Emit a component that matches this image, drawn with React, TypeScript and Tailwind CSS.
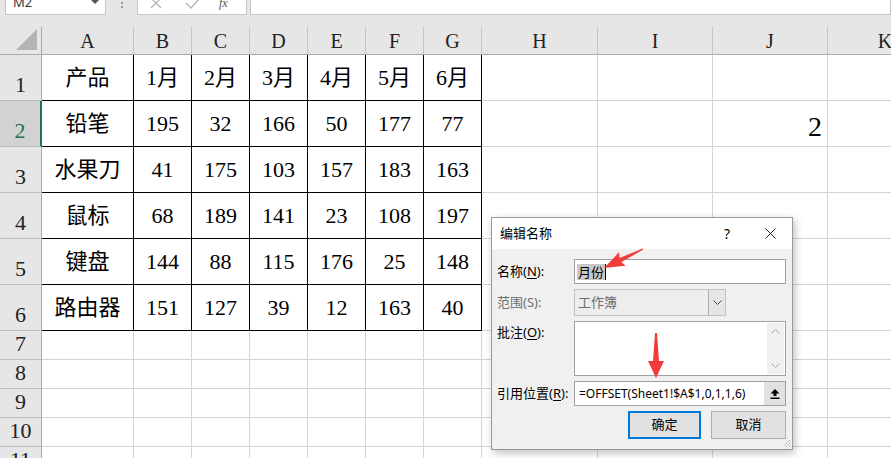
import React from 'react';

const cols = ['A', 'B', 'C', 'D', 'E', 'F', 'G', 'H', 'I', 'J', 'K'];

const data = [
  ['产品', '1月', '2月', '3月', '4月', '5月', '6月'],
  ['铅笔', '195', '32', '166', '50', '177', '77'],
  ['水果刀', '41', '175', '103', '157', '183', '163'],
  ['鼠标', '68', '189', '141', '23', '108', '197'],
  ['键盘', '144', '88', '115', '176', '25', '148'],
  ['路由器', '151', '127', '39', '12', '163', '40'],
];

const rowHeights = ['h-[46px]', 'h-[46px]', 'h-[46px]', 'h-[46px]', 'h-[46px]', 'h-[46px]', 'h-[29px]', 'h-[29px]', 'h-[29px]', 'h-[29px]', 'h-[29px]'];

function TopBar() {
  return (
    <div className="h-[27px] bg-[#e6e6e6] flex items-start overflow-hidden font-['Noto_Sans',sans-serif]">
      <div className="ml-[5px] -mt-[10px] w-[101px] h-[25px] bg-white border border-[#c6c6c6] flex items-center justify-between pl-[7px] pr-[6px] text-[13px] text-[#333] shrink-0">
        <span>M2</span>
        <svg width="8" height="5" viewBox="0 0 8 5"><path d="M0 0 L8 0 L4 4 Z" fill="#555" /></svg>
      </div>
      <div className="w-[31px] flex flex-col items-center gap-[2px] pt-[2px] shrink-0">
        <div className="w-[2px] h-[2px] bg-[#9a9a9a]" />
        <div className="w-[2px] h-[2px] bg-[#9a9a9a]" />
      </div>
      <div className="-mt-[10px] w-[110px] h-[25px] bg-white border border-[#c6c6c6] flex items-center pl-[12px] shrink-0 text-[#b0b0b0]">
        <svg width="12" height="12" viewBox="0 0 12 12"><path d="M1 1 L11 11 M11 1 L1 11" stroke="#b5b5b5" strokeWidth="1.3" /></svg>
        <svg className="ml-[23px]" width="16" height="12" viewBox="0 0 16 12"><path d="M1 6 L6 11 L15 1" stroke="#b5b5b5" strokeWidth="1.4" fill="none" /></svg>
        <span className="ml-[18px] text-[12px] italic text-[#555] font-['Liberation_Serif',serif]">fx</span>
      </div>
      <div className="ml-[3px] -mt-[10px] flex-1 h-[25px] bg-white border border-[#c6c6c6]" />
    </div>
  );
}

function Sheet() {
  return (
    <div className="grid grid-cols-[42px_92px_58px_58px_58px_58px_58px_58px_116px_115px_115px_115px] font-['Liberation_Serif','Noto_Sans_CJK_SC',serif] text-black">
      {/* header row */}
      <div className="h-[28px] bg-[#e6e6e6] border-r border-b border-[#ababab] flex items-end justify-end pr-[3px] pb-[3px]">
        <svg width="22" height="22" viewBox="0 0 22 22"><path d="M21 0 L21 21 L0 21 Z" fill="#b4b4b4" /></svg>
      </div>
      {cols.map((c) => (
        <div key={c} className="h-[28px] bg-[#e6e6e6] border-r border-r-[#c4c4c4] border-b border-b-[#ababab] flex items-center justify-center text-[20px] leading-none text-[#222]">
          {c}
        </div>
      ))}

      {rowHeights.map((h, r) => {
        const selected = r === 1;
        return (
          <React.Fragment key={r}>
            <div
              className={`${h} border-b border-b-[#bcbcbc] flex items-end justify-center pb-[2px] text-[22px] leading-none ${
                selected
                  ? 'bg-[#d2d2d2] border-r-2 border-r-[#217346] text-[#217346]'
                  : 'bg-[#e6e6e6] border-r border-r-[#ababab] text-[#222]'
              }`}
            >
              <span className="pb-[2px]">{r + 1}</span>
            </div>
            {cols.map((c, ci) => {
              const inTable = r < 6 && ci < 7;
              const value = inTable ? data[r][ci] : '';
              if (r === 1 && c === 'J') {
                return (
                  <div key={c} className={`${h} border-r border-b border-[#d4d4d4] flex items-end justify-end pr-[5px] pb-[5px] text-[28px] leading-none`}>
                    2
                  </div>
                );
              }
              return (
                <div
                  key={c}
                  className={`${h} border-r border-b flex items-center justify-center text-[22px] leading-none whitespace-nowrap ${
                    inTable ? 'border-black' : 'border-[#d4d4d4]'
                  }`}
                >
                  {value}
                </div>
              );
            })}
          </React.Fragment>
        );
      })}
    </div>
  );
}

function Underlined({ text, key1 }: { text: string; key1: string }) {
  return (
    <span>
      {text}(<span className="underline underline-offset-2">{key1}</span>):
    </span>
  );
}

function NameDialog() {
  return (
    <div className="absolute left-[491px] top-[217px] w-[302px] h-[233px] border border-[#9a9a9a] bg-[#f0f0f0] shadow-[2px_3px_8px_rgba(0,0,0,0.25)] flex flex-col font-['Noto_Sans','Noto_Sans_CJK_SC',sans-serif] text-[13px] text-black">
      <div className="h-[31px] bg-white flex items-center pl-[8px] pr-[16px] shrink-0">
        <span>编辑名称</span>
        <span className="ml-auto mr-[35px] text-[14px]">?</span>
        <svg width="11" height="11" viewBox="0 0 11 11"><path d="M0.5 0.5 L10.5 10.5 M10.5 0.5 L0.5 10.5" stroke="#222" strokeWidth="1" /></svg>
      </div>
      <div className="relative flex-1 pl-[5px] pr-[6px] pt-[10px] flex flex-col gap-[5px]">
        <div className="flex items-center h-[25px]">
          <div className="w-[77px]"><Underlined text="名称" key1="N" /></div>
          <div className="flex-1 h-full bg-white border border-[#a0a0a0] flex items-center pl-[2px]">
            <span className="bg-[#c8c8c8] px-[1px] leading-[16px]">月份</span>
            <span className="w-[1px] h-[16px] bg-black" />
          </div>
        </div>
        <div className="flex items-center h-[27px]">
          <div className="w-[77px] text-[#6d6d6d]">范围(S):</div>
          <div className="w-[152px] h-full bg-[#ededed] border border-[#c2c2c2] flex items-center">
            <span className="flex-1 pl-[3px] text-[#6d6d6d]">工作簿</span>
            <div className="w-[17px] h-full border-l border-[#adadad] bg-[#e5e5e5] flex items-center justify-center">
              <svg width="9" height="5" viewBox="0 0 9 5"><path d="M0.5 0.5 L4.5 4.5 L8.5 0.5" stroke="#444" strokeWidth="1" fill="none" /></svg>
            </div>
          </div>
        </div>
        <div className="flex items-start h-[55px]">
          <div className="w-[77px] pt-[2px]"><Underlined text="批注" key1="O" /></div>
          <div className="flex-1 h-full bg-white border border-[#a0a0a0] flex justify-end p-[1px]">
            <div className="w-[17px] h-full bg-[#f0f0f0] flex flex-col items-center justify-between py-[6px]">
              <svg width="9" height="5" viewBox="0 0 9 5"><path d="M0.5 4.5 L4.5 0.5 L8.5 4.5" stroke="#a6a6a6" strokeWidth="1" fill="none" /></svg>
              <svg width="9" height="5" viewBox="0 0 9 5"><path d="M0.5 0.5 L4.5 4.5 L8.5 0.5" stroke="#a6a6a6" strokeWidth="1" fill="none" /></svg>
            </div>
          </div>
        </div>
        <div className="flex items-center h-[25px]">
          <div className="w-[77px]"><Underlined text="引用位置" key1="R" /></div>
          <div className="flex-1 h-full bg-white border border-[#a0a0a0] flex items-center">
            <span className="flex-1 pl-[4px] text-[12px]">=OFFSET(Sheet1!$A$1,0,1,1,6)</span>
            <div className="w-[21px] h-full bg-[#e1e1e1] flex items-center justify-center">
              <svg width="10" height="10" viewBox="0 0 10 10"><path d="M5 0 L9.5 4.5 L6.5 4.5 L6.5 7 L3.5 7 L3.5 4.5 L0.5 4.5 Z" fill="#000" /><rect x="0.5" y="8.5" width="9" height="1.5" fill="#000" /></svg>
            </div>
          </div>
        </div>
        <div className="flex justify-end gap-[10px] h-[28px]">
          <div className="w-[73px] h-full bg-[#e1e1e1] border-2 border-[#0078d7] flex items-center justify-center">确定</div>
          <div className="w-[75px] h-full bg-[#e1e1e1] border border-[#adadad] flex items-center justify-center">取消</div>
        </div>
        <svg className="absolute right-[1px] bottom-[1px]" width="9" height="9" viewBox="0 0 9 9">
          <path d="M8 1 L1 8 M8 4 L4 8 M8 7 L7 8" stroke="#9a9a9a" strokeWidth="1" strokeDasharray="1 1" />
        </svg>
      </div>
    </div>
  );
}

function Arrows() {
  return (
    <svg className="absolute left-0 top-0 pointer-events-none" width="891" height="458" viewBox="0 0 891 458">
      <polygon
        points="0,-0.6 25,-2.2 23,-7.5 43.4,0 23,7.5 25,2.2 0,0.6"
        fill="#f23b3b"
        transform="translate(643 249) rotate(154)"
      />
      <polygon
        points="0,-1 28,-3 28,-8 45,0 28,8 28,3 0,1"
        fill="#f23b3b"
        transform="translate(656 333) rotate(90)"
      />
    </svg>
  );
}

export default function App() {
  return (
    <div className="relative w-[891px] h-[458px] overflow-hidden bg-white">
      <TopBar />
      <Sheet />
      <NameDialog />
      <Arrows />
    </div>
  );
}
